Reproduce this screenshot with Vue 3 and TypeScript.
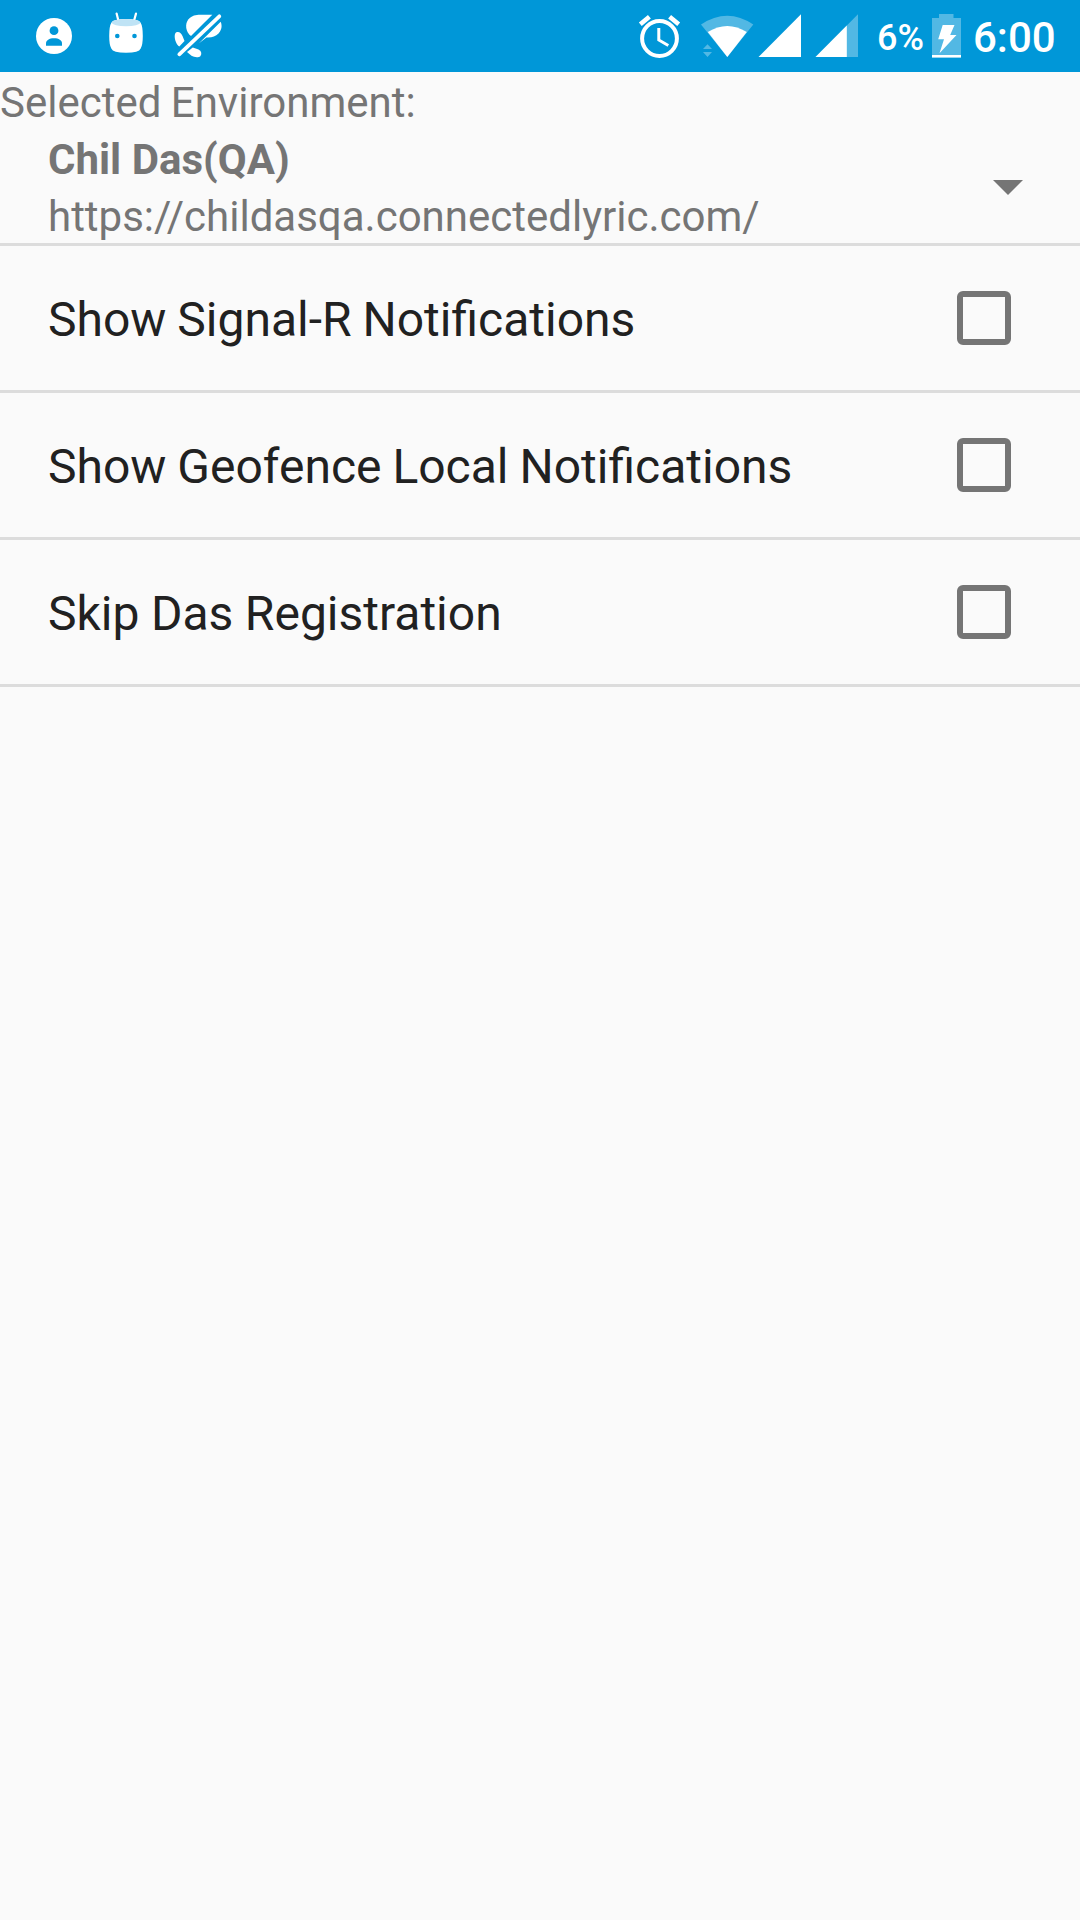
<script setup lang="ts">
interface Setting {
  label: string
  checked: boolean
}

const environment = {
  name: 'Chil Das(QA)',
  url: 'https://childasqa.connectedlyric.com/',
}

const settings: Setting[] = [
  { label: 'Show Signal-R Notifications', checked: false },
  { label: 'Show Geofence Local Notifications', checked: false },
  { label: 'Skip Das Registration', checked: false },
]
</script>

<template>
  <main class="screen">
    <header class="status-bar">
      <div class="notifications">
        <svg width="36" height="72" viewBox="36 0 36 72">
          <circle cx="54" cy="36" r="18" fill="#fff" />
          <circle cx="54" cy="30.7" r="4.4" fill="#0097d8" />
          <path d="M46 45.7V43.5C46 40.3 49.2 38.3 54 38.3S62 40.3 62 43.5V45.7Z" fill="#0097d8" />
        </svg>
        <svg width="34" height="72" viewBox="109 0 34 72">
          <path d="M116.6 13.6L118.6 21.5M136 13.6L133.8 21.5" stroke="#fff" stroke-width="2.2" stroke-linecap="round" />
          <path d="M111.5 22.5Q109.2 26 109.2 36Q109.2 45 111.3 48.5Q113 52.8 126 52.8Q139 52.8 140.7 48.5Q142.8 45 142.8 36Q142.8 26 140.5 22.5Q139 19 126 19Q113 19 111.5 22.5Z" fill="#fff" />
          <ellipse cx="126" cy="22.6" rx="14.2" ry="3.7" fill="#bfe3f5" />
          <circle cx="117.3" cy="36" r="2.3" fill="#0097d8" />
          <circle cx="134.5" cy="36" r="2.3" fill="#0097d8" />
        </svg>
        <svg width="48" height="72" viewBox="174 0 48 72" fill="#fff">
          <path d="M212.3 14.8L191 36C185.700 32 184.500 24 188.500 19.200C191.800 15.500 196 14.800 200 14.800Z" />
          <path d="M220.700 21.800C222.300 25.500 221.800 30 218.500 33.500C215.500 36.800 211.500 37.800 206.500 37.500L199 43.200Z" />
          <path d="M177 32C179.500 31.500 181.500 33.300 182.500 36L184.500 41L179.300 46.600C176.500 44.500 174.700 40 174.700 36.500C174.700 34 175.300 32.400 177 32Z" />
          <path d="M187 52L192.800 47.400L198.500 49.500C201.500 51 202 54 200.300 56.200C198.500 57.800 194 57.300 191.500 55.800Z" />
          <path d="M179.300 54.300L219.300 16.300" stroke="#fff" stroke-width="3.7" stroke-linecap="round" />
        </svg>
      </div>

      <div class="system">
        <svg class="alarm" width="43" height="72" viewBox="638 0 43 72" fill="none" stroke="#fff">
          <circle cx="659.500" cy="38.500" r="17.400" stroke-width="4" />
          <path d="M640.300 24.200L649.400 16.800M678.700 24.200L669.600 16.800" stroke-width="4.600" />
          <path d="M658.800 28V40L668.300 45.500" stroke-width="3" />
        </svg>
        <svg class="wifi" width="53" height="72" viewBox="701 0 53 72" fill="#fff">
          <path d="M701 24.500Q727.300 7 753.300 24.500L727.300 57Z" opacity=".32" />
          <path d="M707.800 32Q727.300 20 746.800 32L727.300 57Z" />
          <path d="M703 49L707.500 44.200L712 49ZM703 52L707.500 57L712 52Z" opacity=".32" />
        </svg>
        <svg class="signal" width="43" height="72" viewBox="758 0 43 72">
          <path d="M758.500 57L801 14.300V57Z" fill="#fff" />
        </svg>
        <svg class="signal-weak" width="43" height="72" viewBox="815 0 43 72" fill="#fff">
          <path d="M815.500 57L858 14.300V57Z" opacity=".32" />
          <path d="M815.500 57L846.800 25.500V57Z" />
        </svg>
        <span class="percent">6%</span>
        <svg class="battery" width="29" height="72" viewBox="932 0 29 72" fill="#fff">
          <path d="M932 18H939V14H953.500V18H961V55H932Z" opacity=".32" />
          <path d="M932 55H961V57.600H932Z" />
          <path d="M942.700 25H954.500L950.200 35H956.500L939.500 53.200L944 39.200H938.200Z" />
        </svg>
        <span class="clock">6:00</span>
      </div>
    </header>

    <section class="environment">
      <div class="caption">Selected Environment:</div>
      <div class="spinner">
        <div class="selection">
          <div class="name">{{ environment.name }}</div>
          <div>{{ environment.url }}</div>
        </div>
        <svg class="caret" width="30" height="15" viewBox="0 0 30 15">
          <path d="M0 0H30L15 15Z" fill="#757575" />
        </svg>
      </div>
    </section>

    <label v-for="setting in settings" :key="setting.label" class="setting">
      <span class="label">{{ setting.label }}</span>
      <input v-model="setting.checked" type="checkbox" class="box" />
    </label>
  </main>
</template>

<style>
body {
  background: #fafafa;
}
</style>

<style scoped>
.screen {
  width: 1080px;
  height: 1920px;
  overflow: hidden;
  background: #fafafa;
  font-family: Roboto, sans-serif;
  color: #212121;
}

.status-bar {
  display: flex;
  justify-content: space-between;
  height: 72px;
  padding: 0 25px 0 36px;
  box-sizing: border-box;
  background: #0097d8;
  color: #fff;
}

.status-bar svg {
  display: block;
  flex: none;
}

.notifications {
  display: flex;
  gap: 37px;
}

.notifications svg:last-child {
  margin-left: -6px;
}

.system {
  display: flex;
}

.alarm {
  margin-right: 20px;
}

.wifi {
  margin-right: 4px;
}

.signal {
  margin-right: 14px;
}

.signal-weak {
  margin-right: 19px;
}

.percent {
  width: 55px;
  font-size: 36px;
  font-weight: 500;
  line-height: 76px;
  white-space: nowrap;
}

.clock {
  width: 82px;
  margin-left: 12px;
  font-size: 42px;
  font-weight: 500;
  line-height: 75px;
  white-space: nowrap;
}

.environment {
  height: 171px;
  border-bottom: 3px solid #dcdcdc;
  color: #757575;
  font-size: 42px;
  line-height: 57px;
}

.caption,
.selection {
  position: relative;
  top: 2px;
}

.caption {
  word-spacing: -1px;
}

.spinner {
  display: flex;
  align-items: center;
  justify-content: space-between;
  height: 114px;
  padding: 0 57px 0 48px;
}

.name {
  font-weight: 700;
}

.caret {
  margin-top: 3px;
}

.setting {
  display: flex;
  align-items: center;
  justify-content: space-between;
  height: 144px;
  padding: 0 69px 0 48px;
  border-bottom: 3px solid #dcdcdc;
}

.label {
  padding-top: 3px;
  font-size: 48px;
  line-height: 56px;
  word-spacing: -1px;
}

.setting:last-child .label {
  word-spacing: -0.4px;
}

.box {
  appearance: none;
  width: 54px;
  height: 54px;
  margin: 0;
  box-sizing: border-box;
  border: 6px solid #757575;
  border-radius: 6px;
}

.box:checked {
  background: #757575;
}
</style>
